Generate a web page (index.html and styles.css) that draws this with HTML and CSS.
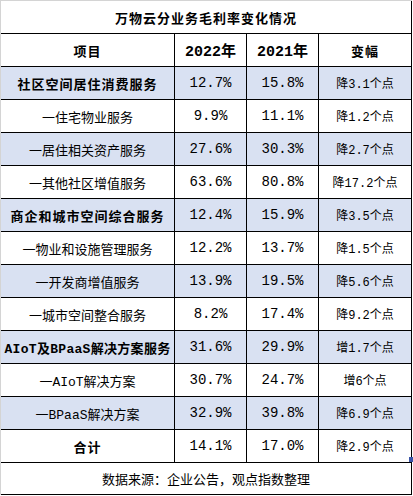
FILE: index.html
```html
<!DOCTYPE html>
<html lang="zh">

<head>
    <meta charset="UTF-8">
    <title>万物云分业务毛利率变化情况</title>
    <link rel="stylesheet" href="styles.css">
</head>

<body>
    <div class="sheet">
        <div class="grid">
            <div class="cell title">万物云分业务毛利率变化情况</div>

            <div class="cell head">项目</div>
            <div class="cell head num">2022年</div>
            <div class="cell head num">2021年</div>
            <div class="cell head">变幅</div>

            <div class="cell name bold blue">社区空间居住消费服务</div>
            <div class="cell num blue">12.7%</div>
            <div class="cell num blue">15.8%</div>
            <div class="cell chg blue">降3.1个点</div>

            <div class="cell name">一住宅物业服务</div>
            <div class="cell num">9.9%</div>
            <div class="cell num">11.1%</div>
            <div class="cell chg">降1.2个点</div>

            <div class="cell name blue">一居住相关资产服务</div>
            <div class="cell num blue">27.6%</div>
            <div class="cell num blue">30.3%</div>
            <div class="cell chg blue">降2.7个点</div>

            <div class="cell name">一其他社区增值服务</div>
            <div class="cell num">63.6%</div>
            <div class="cell num">80.8%</div>
            <div class="cell chg">降17.2个点</div>

            <div class="cell name bold blue">商企和城市空间综合服务</div>
            <div class="cell num blue">12.4%</div>
            <div class="cell num blue">15.9%</div>
            <div class="cell chg blue">降3.5个点</div>

            <div class="cell name">一物业和设施管理服务</div>
            <div class="cell num">12.2%</div>
            <div class="cell num">13.7%</div>
            <div class="cell chg">降1.5个点</div>

            <div class="cell name blue">一开发商增值服务</div>
            <div class="cell num blue">13.9%</div>
            <div class="cell num blue">19.5%</div>
            <div class="cell chg blue">降5.6个点</div>

            <div class="cell name">一城市空间整合服务</div>
            <div class="cell num">8.2%</div>
            <div class="cell num">17.4%</div>
            <div class="cell chg">降9.2个点</div>

            <div class="cell name bold tight blue">AIoT及BPaaS解决方案服务</div>
            <div class="cell num blue">31.6%</div>
            <div class="cell num blue">29.9%</div>
            <div class="cell chg blue">增1.7个点</div>

            <div class="cell name">一AIoT解决方案</div>
            <div class="cell num">30.7%</div>
            <div class="cell num">24.7%</div>
            <div class="cell chg">增6个点</div>

            <div class="cell name blue">一BPaaS解决方案</div>
            <div class="cell num blue">32.9%</div>
            <div class="cell num blue">39.8%</div>
            <div class="cell chg blue">降6.9个点</div>

            <div class="cell name bold">合计</div>
            <div class="cell num">14.1%</div>
            <div class="cell num">17.0%</div>
            <div class="cell chg">降2.9个点<span class="handle"></span></div>

            <div class="cell source">数据来源：企业公告，观点指数整理</div>
        </div>
    </div>
</body>

</html>
```

FILE: styles.css
```css
body {
    margin: 0;
    background-color: #fff;
    font-family: "Liberation Mono", "Noto Sans CJK SC", monospace;
    font-size: 13px;
    color: #000;
}

.sheet {
    display: inline-block;
    border-top: 1px solid #d4d4d4;
    border-left: 1px solid #d4d4d4;
}

.grid {
    display: grid;
    grid-template-columns: 173px 71px 71px 92px;
    grid-template-rows: repeat(14, 32px) 31px;
    gap: 1px;
    padding: 0 1px 1px 0;
    background-color: #000;
}

.cell {
    display: flex;
    align-items: center;
    justify-content: center;
    background-color: #fff;
    white-space: nowrap;
    position: relative;
}

.blue {
    background-color: #d9e1f2;
}

.title {
    grid-column: 1 / 5;
    font-weight: bold;
    letter-spacing: 1px;
}

.head {
    font-weight: bold;
    letter-spacing: 1px;
}

.bold {
    font-weight: bold;
    letter-spacing: 1px;
}

.bold.tight {
    letter-spacing: 0.3px;
}

.num {
    font-size: 14px;
}

.head.num {
    font-size: 15px;
    letter-spacing: 0;
}

.chg {
    font-size: 12px;
}

.source {
    grid-column: 1 / 5;
}

.handle {
    position: absolute;
    right: -2px;
    bottom: 0;
    width: 4px;
    height: 5px;
    background-color: #3a55a8;
}
```
